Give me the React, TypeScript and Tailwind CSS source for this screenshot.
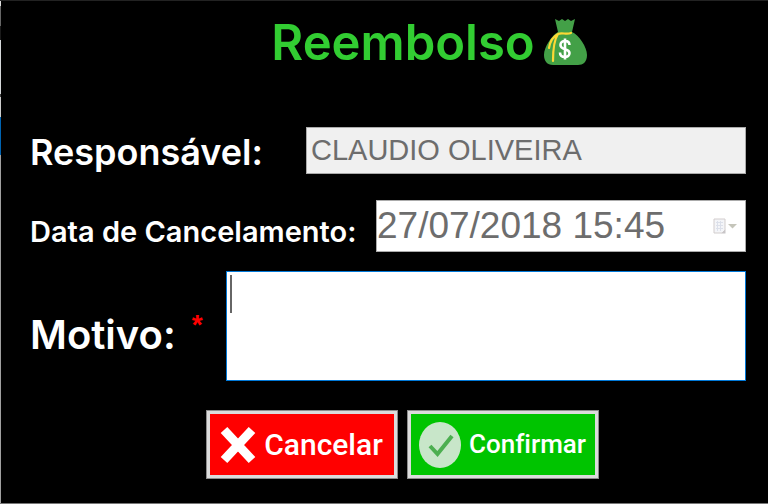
import React from "react";

function MoneyBag() {
  return (
    <svg viewBox="0 0 44 48" className="h-12 w-11" aria-hidden="true">
      <path d="M12 1l4 2 3-2 3 2 3-2 3 2 4-2-3 13c7 3 15 15 15 23 0 7-4 10-9 10H10c-6 0-9-4-9-10 0-8 8-20 14-23z" fill="#43a047" />
      <path d="M28 15c-5 2-9-1-13 1C9 19 7 24 6 30M15 16c-4 6-5 16-5 27" fill="none" stroke="#fdd835" strokeWidth="2.2" strokeLinecap="round" />
      <path d="M26.500 27c0-3-2-4-4.500-4s-4.500 1.500-4.500 4c0 5.500 9 3 9 8 0 2.500-2 4-4.500 4s-5-1-5-4.500M22 20.500v21" fill="none" stroke="#fff" strokeWidth="2.600" />
    </svg>
  );
}

function CalendarIcon() {
  return (
    <svg viewBox="0 0 26 16" className="h-4 w-[26px]" aria-hidden="true">
      <path d="M1 1h11v11l-3 3H1z" fill="#f4f5f8" stroke="#d2cdcd" />
      <path d="M3 4.500h7M3 7.500h7M3 10.500h7M4.500 3v10M7.500 3v10" stroke="#dce0ea" />
      <path d="M12.500 11.500v4h-4z" fill="#c8c5c8" />
      <path d="M15 6h9l-4.500 4.500z" fill="#c5c5ba" />
    </svg>
  );
}

function WindowEdge() {
  return (
    <div className="flex w-px shrink-0 flex-col" aria-hidden="true">
      <div className="h-[5px] bg-[#dddddd]" />
      <div className="h-5 bg-[#666666]" />
      <div className="h-3.5 bg-[#1a1a1a]" />
      <div className="h-[54px] bg-[#d5d8da]" />
      <div className="h-[3px] bg-[#444444]" />
      <div className="h-5 bg-[#cccccc]" />
      <div className="h-[38px] bg-[#0063b1]" />
      <div className="flex-1 bg-[#a0a0a0]" />
    </div>
  );
}

const labelStyle = "shrink-0 whitespace-nowrap font-['Inter',sans-serif] font-semibold text-white";
const buttonStyle =
  "flex h-[69px] w-[192px] items-center justify-center gap-2 border-4 border-[#dcdcdc] outline outline-1 -outline-offset-1 outline-[#8c8c8c]";

export default function App() {
  return (
    <div className="flex min-h-screen border-t border-b border-t-[#222222] border-b-[#777777] bg-black">
      <WindowEdge />
      <form className="flex min-w-0 flex-1 flex-col pr-[22px] pl-[29px]" onSubmit={(e) => e.preventDefault()}>
        <h1 className="flex h-[82px] items-center justify-center gap-2 pl-[86px] pr-1 font-['Inter',sans-serif] text-[49px] leading-none font-semibold text-[#32cd32]">
          Reembolso
          <MoneyBag />
        </h1>

        <div className="mt-11 flex h-[47px] items-center">
          <label htmlFor="responsavel" className={`${labelStyle} w-[276px] pt-0.5 text-[36px] leading-[48px]`}>
            Responsável:
          </label>
          <input
            id="responsavel"
            disabled
            defaultValue="CLAUDIO OLIVEIRA"
            className="h-full min-w-0 flex-1 border border-[#ababab] bg-[#f0f0f0] px-1 font-['Liberation_Sans',Arial,sans-serif] text-[29px] text-[#6d6d6d]"
          />
        </div>

        <div className="mt-[26px] flex h-[52px]">
          <label htmlFor="data" className={`${labelStyle} w-[346px] pt-3 text-[29px] leading-10`}>
            Data de Cancelamento:
          </label>
          <div className="flex min-w-0 flex-1 items-center border border-[#ababab] bg-white pr-1.5">
            <input
              id="data"
              disabled
              defaultValue="27/07/2018 15:45"
              className="h-full min-w-0 flex-1 font-['Liberation_Sans',Arial,sans-serif] text-[37px] text-[#6d6d6d]"
            />
            <button type="button" disabled aria-label="Abrir calendário">
              <CalendarIcon />
            </button>
          </div>
        </div>

        <div className="mt-[19px] flex h-[110px]">
          <label htmlFor="motivo" className={`${labelStyle} flex w-[196px] gap-4 pt-[38px] text-[40px] leading-[52px]`}>
            Motivo:
            <span className="font-['Liberation_Sans',Arial,sans-serif] text-[28px] leading-8 font-bold text-[#ff0000]">*</span>
          </label>
          <div className="relative min-w-0 flex-1">
            <textarea
              id="motivo"
              className="block h-full w-full resize-none border border-[#0078d7] bg-white px-1 font-['Liberation_Sans',Arial,sans-serif] text-[32px] text-black caret-transparent outline-none"
            />
            <span className="absolute top-1 left-1 h-[38px] w-0.5 bg-[#666666]" />
          </div>
        </div>

        <div className="mt-[29px] flex justify-center gap-[9px] pl-7 font-['Roboto',sans-serif] font-medium text-white [font-variant-ligatures:none]">
          <button type="button" className={`${buttonStyle} bg-[#ff0000] text-[30px]`}>
            <svg viewBox="0 0 36 38" className="h-[38px] w-9 shrink-0" aria-hidden="true">
              <path d="M4 4l28 30M32 4L4 34" stroke="#fff" strokeWidth="9" />
            </svg>
            Cancelar
          </button>
          <button type="submit" className={`${buttonStyle} bg-[#00c400] text-[26px]`}>
            <svg viewBox="0 0 42 46" className="h-[46px] w-[42px] shrink-0" aria-hidden="true">
              <ellipse cx="21" cy="23" rx="21" ry="23" fill="#c8e6c9" />
              <path d="M11 24l7.500 8L33 14" fill="none" stroke="#4caf50" strokeWidth="4" />
            </svg>
            Confirmar
          </button>
        </div>
      </form>
    </div>
  );
}
